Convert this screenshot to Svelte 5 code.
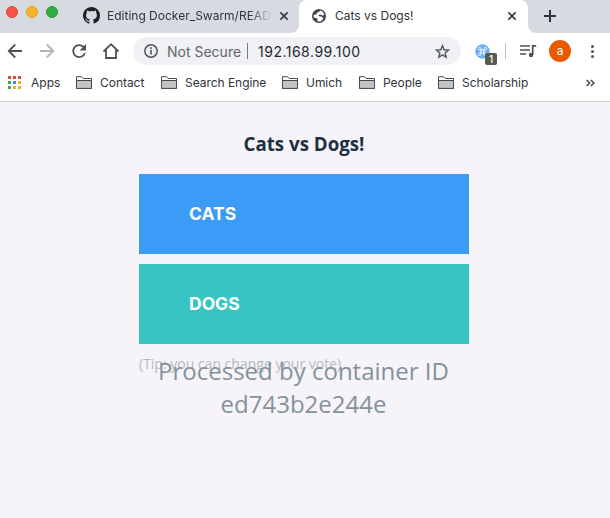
<script>
  const bookmarks = [
    { name: 'Contact', width: 85 },
    { name: 'Search Engine', width: 121 },
    { name: 'Umich', width: 77 },
    { name: 'People', width: 79 },
    { name: 'Scholarship', width: 100 }
  ];
  const gridColors = ['#d94b34', '#d94b34', '#d94b34', '#3ba55a', '#4688e8', '#eeae35', '#3ba55a', '#eeae35', '#eeae35'];
</script>

<div class="window">
  <header>
    <div class="tabs">
      <div class="tab inactive">
        <div class="lights"><i class="red"></i><i class="yellow"></i><i class="green"></i></div>
        <svg class="github" width="17" height="17" viewBox="0 0 16 16"><path fill="#1d2025" d="M8 0C3.58 0 0 3.58 0 8c0 3.54 2.29 6.53 5.47 7.59.4.07.55-.17.55-.38 0-.19-.01-.82-.01-1.49-2.01.37-2.53-.49-2.69-.94-.09-.23-.48-.94-.82-1.13-.28-.15-.68-.52-.01-.53.63-.01 1.08.58 1.23.82.72 1.21 1.87.87 2.33.66.07-.52.28-.87.51-1.07-1.78-.2-3.64-.89-3.64-3.95 0-.87.31-1.59.82-2.15-.08-.2-.36-1.02.08-2.12 0 0 .67-.21 2.2.82A7.5 7.5 0 0 1 8 3.86c.68 0 1.36.09 2 .27 1.53-1.04 2.2-.82 2.2-.82.44 1.1.16 1.92.08 2.12.51.56.82 1.27.82 2.15 0 3.07-1.87 3.75-3.65 3.95.29.25.54.73.54 1.48 0 1.07-.01 1.93-.01 2.2 0 .21.15.46.55.38A8.01 8.01 0 0 0 16 8c0-4.42-3.58-8-8-8z" /></svg>
        <span class="title faded">Editing Docker_Swarm/README</span>
        <svg class="close" width="10" height="10" viewBox="0 0 10 10"><path d="M1.4 1.4l7.2 7.2M8.6 1.4L1.4 8.6" /></svg>
      </div>
      <div class="tab active">
        <svg class="globe" width="14" height="14" viewBox="0 0 14 14"><circle cx="7" cy="7" r="7" fill="#42464c" /><path fill="#fff" d="M8.200 1.600C7.600 3 6.400 3.300 5.300 3.500 4.600 3.700 4.900 5 4.200 5.400L1.700 6.100c-.3 1 0 2 .3 2.700 1.300.2 2.700.1 3.400.9.700.8.100 2-.5 2.400 1.300.6 2.900.5 4 .1.800-1 2.200-1.500 2.300-2.700 0-1.200-1.300-1.400-2.200-1.900C8 7.100 6.900 7.300 6.600 6.700c-.2-.8.800-1 1.600-1.100 1.100 0 1.400.8 2.300.8.700 0 1.200-.4 1.700-.7-.4-1.900-1.900-3.700-4-4.100z" /></svg>
        <span class="title">Cats vs Dogs!</span>
        <svg class="close" width="10" height="10" viewBox="0 0 10 10"><path d="M1.4 1.4l7.2 7.2M8.6 1.4L1.4 8.6" /></svg>
      </div>
      <div class="newtab"><svg width="12" height="12" viewBox="0 0 12 12"><path d="M6 0v12M0 6h12" stroke="#30343a" stroke-width="2" /></svg></div>
    </div>
    <div class="toolbar">
      <svg class="nav" width="132" height="36" viewBox="0 0 132 36" fill="none" stroke="#4d5157" stroke-width="1.8">
        <path d="M22 18H9M15.2 11.5L8.800 18l6.400 6.500" />
        <path stroke="#b0b2b5" d="M40 18h13M46.800 11.500l6.400 6.500-6.400 6.500" />
        <path d="M84.200 14.800A6 6 0 1 0 84.900 20" /><path fill="#4d5157" stroke="none" d="M86 11v6.400h-6.400z" />
        <path d="M103.500 18.500l7.500-7.300 7.500 7.300M106 17v8h10v-8" />
      </svg>
      <div class="address">
        <svg width="14" height="14" viewBox="0 0 14 14"><circle cx="7" cy="7" r="6.2" fill="none" stroke="#50545a" stroke-width="1.5" /><path d="M7 6v4.500M7 3.300v1.600" stroke="#50545a" stroke-width="1.6" /></svg>
        <span class="security">Not Secure</span><i class="rule"></i><span class="url">192.168.99.100</span>
        <svg class="star" width="15" height="15" viewBox="0 0 24 24"><path d="M12 2.800l2.600 6.500 7 .5-5.400 4.500 1.700 6.900-5.900-3.800-5.900 3.800 1.700-6.900-5.400-4.500 7-.5z" fill="none" stroke="#51555b" stroke-width="2.3" /></svg>
      </div>
      <div class="extension">
        <svg width="15" height="15" viewBox="0 0 15 15"><circle cx="7.500" cy="7.500" r="7.200" fill="#6caef2" /><path d="M6 6H4.700A1.300 1.300 0 1 1 6 4.700v5.600A1.300 1.300 0 1 1 4.700 9h5.600A1.300 1.300 0 1 1 9 10.300V4.700A1.300 1.300 0 1 1 10.300 6z" fill="none" stroke="#eef7ff" stroke-width="1" /></svg>
        <b>1</b>
      </div>
      <i class="divider"></i>
      <svg class="music" width="17" height="14" viewBox="0 0 17 14" fill="none" stroke="#4d5157" stroke-width="1.7"><path d="M0 2h10M0 6h10M0 10h6M12.700 11V1.800h3.500" /><circle cx="11" cy="11" r="2.200" fill="#4d5157" stroke="none" /></svg>
      <span class="avatar">a</span>
      <div class="menu"><i></i><i></i><i></i></div>
    </div>
    <nav>
      <div class="apps"><div class="grid">{#each gridColors as color}<i style:background={color}></i>{/each}</div><span>Apps</span></div>
      {#each bookmarks as bookmark}
        <div class="bookmark" style:width={`${bookmark.width}px`}>
          <svg width="16" height="13" viewBox="0 0 16 13"><path fill="#fff" stroke="#45494e" d="M.5 12.400V.7h5l1.700 1.800h8.300v9.900z" /><path fill="#c4c4c4" stroke="#45494e" d="M.5 4.500h15v7.900H.5z" /></svg>
          <span>{bookmark.name}</span>
        </div>
      {/each}
      <svg class="more" width="9" height="8" viewBox="0 0 9 8"><path d="M.7 1l3 3-3 3M4.900 1l3 3-3 3" fill="none" stroke="#43474d" stroke-width="1.500" /></svg>
    </nav>
  </header>
  <main>
    <section>
      <h3>Cats vs Dogs!</h3>
      <button class="cats">CATS</button>
      <button class="dogs">DOGS</button>
      <p class="tip">(Tip: you can change your vote)</p>
      <p class="host">Processed by container ID<br />ed743b2e244e</p>
    </section>
  </main>
</div>

<style>
  :global(body) { background: #f6f4f8; overflow: hidden; }
  * { box-sizing: border-box; }
  svg { display: block; flex: none; }
  .window { width: 610px; height: 518px; background: #f6f4f8; font-family: Inter, sans-serif; }
  header { height: 102px; background: #fff; border-bottom: 1px solid #cfd0d6; color: #303338; }
  .tabs { height: 33px; display: flex; background: #fff; font-size: 12px; }
  .tab { display: flex; height: 33px; align-items: center; }
  .inactive { width: 299px; background: #d8dae2; border-bottom-right-radius: 8px; padding-bottom: 2px; }
  .active { width: 229px; padding: 0 11px 2px 13px; background: radial-gradient(circle at 8px 8px, #fff 7.5px, #d8dae2 8.5px) 0 0 / 8px 8px no-repeat, radial-gradient(circle at 0 8px, #fff 7.5px, #d8dae2 8.5px) 100% 0 / 8px 8px no-repeat, #fff; }
  .lights { display: flex; gap: 8px; width: 83px; padding-left: 6px; margin-top: -7px; }
  .lights i { width: 12px; height: 12px; border-radius: 50%; }
  .red { background: #f6534b; border: 1px solid #d9483e; }
  .yellow { background: #f8b32d; border: 1px solid #d99d2b; }
  .green { background: #30ad43; border: 1px solid #2a9b3b; }
  .title { white-space: nowrap; line-height: 16px; }
  .github + .title { margin-left: 7px; }
  .faded { width: 165px; overflow: hidden; mask-image: linear-gradient(to right, #000 86%, transparent); }
  .inactive .close { margin-left: 7px; }
  .close path { stroke: #34383d; stroke-width: 1.6; fill: none; }
  .globe + .title { margin-left: 9px; }
  .active .close { margin-left: auto; }
  .newtab { flex: 1; background: #d8dae2; border-bottom-left-radius: 8px; padding: 10px 16px; }
  .toolbar { height: 36px; display: flex; align-items: center; }
  .address { width: 328px; height: 28px; margin-left: 1px; border-radius: 14px; background: #f0f1f4; display: flex; align-items: center; padding: 0 11px 0 11px; font-size: 14px; white-space: nowrap; }
  .security { color: #63666b; margin-left: 9px; width: 75px; }
  .rule { width: 1px; height: 16px; background: #7a7d82; margin: 0 10px 0 5px; }
  .url { color: #25282d; letter-spacing: .5px; }
  .star { margin-left: auto; }
  .extension { width: 22px; height: 24px; margin-left: 14px; padding-top: 5px; position: relative; }
  .extension b { position: absolute; left: 10px; top: 14px; width: 12px; height: 12px; border-radius: 2px; background: #535d49; color: #fff; font: 500 10px/12px Inter, sans-serif; text-align: center; }
  .divider { width: 1px; height: 16px; background: #bfc1c4; margin: 0 14px 0 8px; }
  .music { margin-right: 12px; }
  .avatar { width: 22px; height: 22px; background: #e95a00; border-radius: 50%; color: #fff; font-size: 12px; line-height: 21px; text-align: center; }
  .menu { display: flex; flex-direction: column; gap: 2px; margin-left: 20px; }
  .menu i { width: 3px; height: 3px; background: #505459; border-radius: 50%; }
  nav { height: 32px; padding: 0 15px 5px 8px; display: flex; align-items: center; font-size: 12px; }
  .apps { width: 68px; flex: none; display: flex; gap: 10px; align-items: center; }
  .grid { display: grid; grid-template-columns: repeat(3, 3px); gap: 2px; }
  .grid i { height: 3px; }
  .bookmark { display: flex; align-items: center; gap: 8px; flex: none; white-space: nowrap; letter-spacing: -.04px; }
  .more { margin-left: auto; }
  section { width: 330px; margin-left: 139px; padding-top: 28px; font-family: 'Open Sans', sans-serif; }
  h3 { margin: 0 0 17px; text-align: center; font-size: 18.72px; line-height: 27px; font-weight: 700; color: #1d3142; }
  button { width: 330px; height: 80px; display: block; border: 0; border-radius: 0; margin: 0 0 10px; padding: 0 50px 2px; text-align: left; color: #fff; font: 700 17.5px Inter, sans-serif; }
  .cats { background: #3b9cf7; }
  .dogs { background: #37c4c3; }
  p { margin: 0; }
  .tip { font-size: 14px; line-height: 20px; color: #b3babf; white-space: nowrap; }
  .host { margin: -20px 0 0 -1px; font-size: 24px; line-height: 33px; text-align: center; color: #84929c; }
</style>
